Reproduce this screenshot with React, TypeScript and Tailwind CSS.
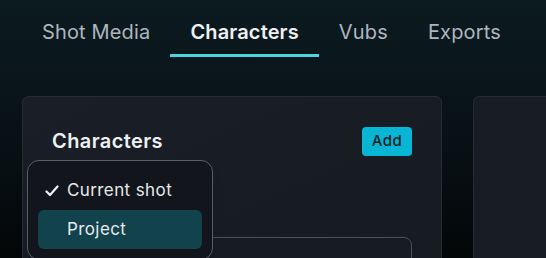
import React from 'react';

const TABS = ['Shot Media', 'Characters', 'Vubs', 'Exports'];

export default function App() {
  const active = 'Characters';

  return (
    <div className="w-[546px] h-[258px] overflow-hidden bg-gradient-to-b from-[#0c1b21] via-[#081216] to-[#040708] font-['Inter',sans-serif]">
      {/* Tabs */}
      <nav className="flex pl-[22px] pt-[18px]">
        {TABS.map((tab) => (
          <div key={tab} className="relative px-5 h-[39px] flex items-start">
            <span
              className={`text-[20px] leading-[28px] tracking-[0.15px] ${
                tab === active ? 'font-semibold text-[#eef1f4]' : 'text-[#aeb6bf]'
              }`}
            >
              {tab}
            </span>
            {tab === active && (
              <div className="absolute left-0 right-0 bottom-0 h-[3px] bg-[#4fd1e0]" />
            )}
          </div>
        ))}
      </nav>

      <div className="flex gap-[31px] pl-[22px] mt-[39px]">
        {/* Characters panel */}
        <div className="relative w-[420px] h-[200px] shrink-0 rounded-md border border-[#262b34] bg-gradient-to-br from-[#1a1e26] to-[#161a21] px-[29px] pt-[29px]">
          <div className="flex items-center justify-between">
            <h2 className="text-[20px] font-semibold tracking-[0.4px] text-[#eef1f4]">Characters</h2>
            <button className="h-[29px] w-[50px] rounded-[4px] bg-[#06b6d4] text-[15px] font-medium tracking-[0.4px] text-[#0b1a20]">
              Add
            </button>
          </div>

          <div className="mt-[81px] h-[40px] w-[360px] rounded-lg border border-[#4a505a]" />

          {/* Scope dropdown */}
          <div className="absolute left-[4px] top-[63px] w-[186px] rounded-xl border border-[#5a606b] bg-[#12151b] p-[10px] shadow-lg">
            <div className="flex h-[39px] items-center rounded-md text-[17px] tracking-[0.4px] text-[#e6e9ed]">
              <span className="flex w-[29px] pl-[7px]">
                <svg width="14" height="12" viewBox="0 0 14 12" fill="none">
                  <path d="M1.5 6.5 L5 10 L12.5 1.5" stroke="#eef1f4" strokeWidth="2.2" strokeLinecap="round" strokeLinejoin="round" />
                </svg>
              </span>
              Current shot
            </div>
            <div className="flex h-[39px] items-center rounded-md bg-[#12424c] pl-[29px] text-[17px] tracking-[0.4px] text-[#e6e9ed]">
              Project
            </div>
          </div>
        </div>

        {/* Next panel */}
        <div className="h-[200px] flex-1 rounded-l-md border border-r-0 border-[#262b34] bg-[#181c24]" />
      </div>
    </div>
  );
}
